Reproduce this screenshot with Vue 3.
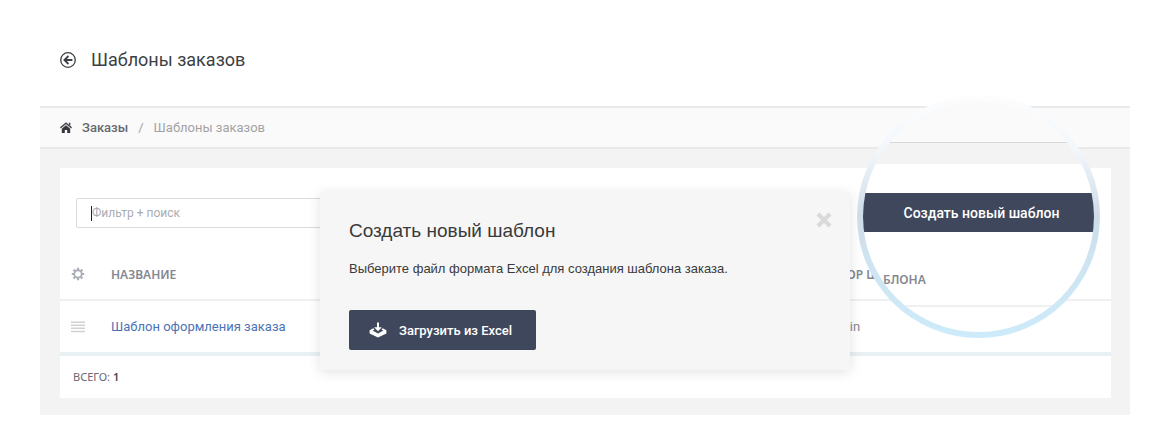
<script setup>
import { ref } from 'vue';

const search = ref('');
const showModal = ref(true);

const templates = [
  { id: 1, name: 'Шаблон оформления заказа', author: 'admin' }
];
</script>

<template>
  <main class="page">
    <header class="page-header">
      <a href="#" class="back" aria-label="Назад">
        <svg width="16" height="16" viewBox="0 0 16 16" fill="none" stroke="#3c3f45">
          <circle cx="8" cy="8" r="7.3" stroke-width="1.3" />
          <path d="M12.4 8H4.6M8.4 4L4.4 8L8.4 12" stroke-width="1.8" />
        </svg>
      </a>
      <h1>Шаблоны заказов</h1>
    </header>

    <nav class="breadcrumbs">
      <svg width="12" height="12" viewBox="0 0 12 12">
        <path d="M.4 5.8L6 1.2L11.6 5.8" fill="none" stroke="#45474c" stroke-width="1.5" />
        <path d="M8.8 .8h1.6v3l-1.6-1.4z" fill="#45474c" />
        <path d="M1.8 6.8L6 3.3L10.2 6.8V11H7.2V8H4.8V11H1.8z" fill="#35373c" />
      </svg>
      <a href="#">Заказы</a>
      <span class="separator">/</span>
      <span class="current">Шаблоны заказов</span>
    </nav>

    <section class="content">
      <div class="card">
        <div class="search">
          <span class="caret"></span>
          <input v-model="search" type="text" placeholder="Фильтр + поиск" aria-label="Фильтр + поиск" />
        </div>

        <table>
          <thead>
            <tr>
              <th class="col-icon">
                <svg width="14" height="14" viewBox="0 0 14 14">
                  <circle cx="7" cy="7" r="3.7" fill="none" stroke="#a9adb5" stroke-width="1.8" />
                  <path
                    d="M7 .8V3M7 11V13.2M.8 7H3M11 7H13.2M2.6 2.6L4.2 4.2M9.8 9.8L11.4 11.4M2.6 11.4L4.2 9.8M9.8 4.2L11.4 2.6"
                    stroke="#a9adb5"
                    stroke-width="2.2"
                  />
                </svg>
              </th>
              <th>НАЗВАНИЕ</th>
              <th class="col-author">АВТОР Ш</th>
            </tr>
          </thead>
          <tbody>
            <tr v-for="item in templates" :key="item.id">
              <td class="col-icon">
                <svg width="14" height="12" viewBox="0 0 14 12" fill="#cfd1d5">
                  <path d="M0 .4h14v1.5H0zM0 3.5h14v1.5H0zM0 6.6h14v1.5H0zM0 9.7h14v1.5H0z" />
                </svg>
              </td>
              <td><a href="#">{{ item.name }}</a></td>
              <td>{{ item.author }}</td>
            </tr>
          </tbody>
        </table>

        <div class="total">ВСЕГО: <b>{{ templates.length }}</b></div>
      </div>
    </section>

    <div v-if="showModal" class="modal" role="dialog" aria-labelledby="modal-title">
      <button type="button" class="close" aria-label="Закрыть" @click="showModal = false">
        <svg width="16" height="16" viewBox="0 0 16 16">
          <path d="M2 2L14 14M14 2L2 14" stroke="#dadada" stroke-width="4.4" />
        </svg>
      </button>
      <h2 id="modal-title">Создать новый шаблон</h2>
      <p>Выберите файл формата Excel для создания шаблона заказа.</p>
      <button type="button" class="upload">
        <svg width="18" height="16" viewBox="0 0 18 16" fill="#fff">
          <path d="M8 .5h2v4.7h2.8L9 9.2L5.2 5.2H8z" />
          <path d="M4.4 6.2L.6 8.2V11.4L9 15.6L17.4 11.4V8.2L13.6 6.2L12.4 7.5L14.4 8.6L9 11.4L3.6 8.6L5.6 7.5z" />
        </svg>
        Загрузить из Excel
      </button>
    </div>

    <!-- Лупа над кнопкой создания шаблона -->
    <div class="lens">
      <div class="lens-view">
        <div class="lens-crumbs"></div>
        <div class="lens-gap"></div>
        <button type="button" class="create" @click="showModal = true">Создать новый шаблон</button>
        <div class="lens-column">БЛОНА</div>
      </div>
    </div>
  </main>
</template>

<style>
body {
  margin: 0;
  background: #fff;
}
</style>

<style scoped>
.page {
  position: relative;
  margin: 0 40px;
  font-family: Roboto, 'Liberation Sans', sans-serif;
  font-size: 13px;
  color: #3c3f45;
}

svg {
  display: block;
  flex: none;
}

a {
  color: inherit;
  text-decoration: none;
}

button {
  border: 0;
  cursor: pointer;
}

.page-header {
  display: flex;
  align-items: center;
  gap: 15px;
  padding: 46px 20px 32px;
}

h1 {
  margin: 0;
  font-size: 18px;
  font-weight: 400;
  line-height: 28px;
}

.breadcrumbs {
  display: flex;
  align-items: center;
  gap: 10px;
  padding: 0 20px;
  line-height: 39px;
  background: #fafafa;
  border-top: 2px solid #eaeaea;
  border-bottom: 2px solid #eaeaea;
}

.breadcrumbs a {
  font-weight: 500;
  color: #66696e;
}

.separator,
.current {
  color: #a3a3a3;
}

.content {
  padding: 19px 19px 17px 20px;
  background: #f3f3f3;
}

.card {
  padding-top: 30px;
  background: #fff;
}

.search {
  display: flex;
  align-items: center;
  width: 70%;
  height: 28px;
  margin-left: 16px;
  padding-left: 14px;
  box-sizing: content-box;
  border: 1px solid #d8dcdc;
  border-radius: 2px;
}

.caret {
  width: 1px;
  height: 15px;
  background: #222;
}

.search input {
  flex: 1;
  min-width: 0;
  padding: 0;
  border: 0;
  outline: 0;
  background: none;
  font: inherit;
  font-size: 12px;
}

.search input::placeholder {
  color: #a9adb2;
}

table {
  width: 100%;
  margin-top: 21px;
  border-collapse: collapse;
  table-layout: fixed;
}

th,
td {
  padding: 0;
  text-align: left;
}

th {
  height: 50px;
  border-bottom: 2px solid #f0f0f1;
  font-family: 'Noto Sans', sans-serif;
  font-size: 12px;
  font-weight: 600;
  color: #858891;
}

td {
  height: 51px;
  border-bottom: 4px solid #e9f0f3;
  color: #85888f;
}

td a {
  color: #4a73b5;
}

.col-icon {
  width: 40px;
  padding-left: 11px;
}

.col-author {
  width: 287px;
}

.total {
  padding: 0 13px;
  font-family: 'Noto Sans', sans-serif;
  font-size: 11px;
  line-height: 42px;
  color: #6a6672;
}

.total b {
  font-weight: 600;
  color: #4c4552;
}

.modal {
  position: absolute;
  top: 192px;
  left: 50%;
  width: 530px;
  padding: 26px 29px 20px;
  box-sizing: border-box;
  transform: translateX(-50%);
  background: #f6f6f6;
  box-shadow: 0 2px 12px rgba(0, 0, 0, 0.12);
  font-family: 'Liberation Sans', Arial, sans-serif;
  color: #3a3a3a;
}

.modal h2 {
  margin: 0;
  font-size: 19px;
  font-weight: 400;
  line-height: 26px;
}

.modal p {
  margin: 16px 0 32px;
  font-size: 13px;
  line-height: 18px;
}

.close {
  position: absolute;
  top: 20px;
  right: 18px;
  padding: 0;
  background: none;
}

.upload {
  display: flex;
  align-items: center;
  gap: 12px;
  height: 40px;
  padding: 0 24px 0 20px;
  border-radius: 2px;
  background: #3f475d;
  color: #fff;
  font-family: Roboto, sans-serif;
  font-size: 13px;
  font-weight: 500;
}

.lens {
  position: absolute;
  top: 95px;
  right: 30px;
  width: 243px;
  height: 243px;
  padding: 6px;
  box-sizing: border-box;
  border-radius: 50%;
  background: linear-gradient(#fdfdfd, #f2f7fc 22%, #cddce8 50%, #cfe4f1 68%, #cdebfa);
}

.lens-view {
  height: 100%;
  overflow: hidden;
  border-radius: 50%;
  background: #fff;
}

.lens-crumbs {
  height: 41px;
  background: #fafafa;
  border-bottom: 1px solid #d3d8dd;
}

.lens-gap {
  height: 21px;
  margin-bottom: 29px;
  background: #f3f3f3;
}

.create {
  display: block;
  width: 100%;
  height: 39px;
  padding: 0 0 0 6px;
  background: #3f475d;
  color: #fff;
  font-family: Roboto, sans-serif;
  font-size: 14px;
  font-weight: 500;
}

.lens-column {
  padding: 36px 0 13px 20px;
  border-bottom: 2px solid #f0f0f1;
  font-family: 'Noto Sans', sans-serif;
  font-size: 12px;
  font-weight: 600;
  line-height: 24px;
  color: #858891;
}
</style>
